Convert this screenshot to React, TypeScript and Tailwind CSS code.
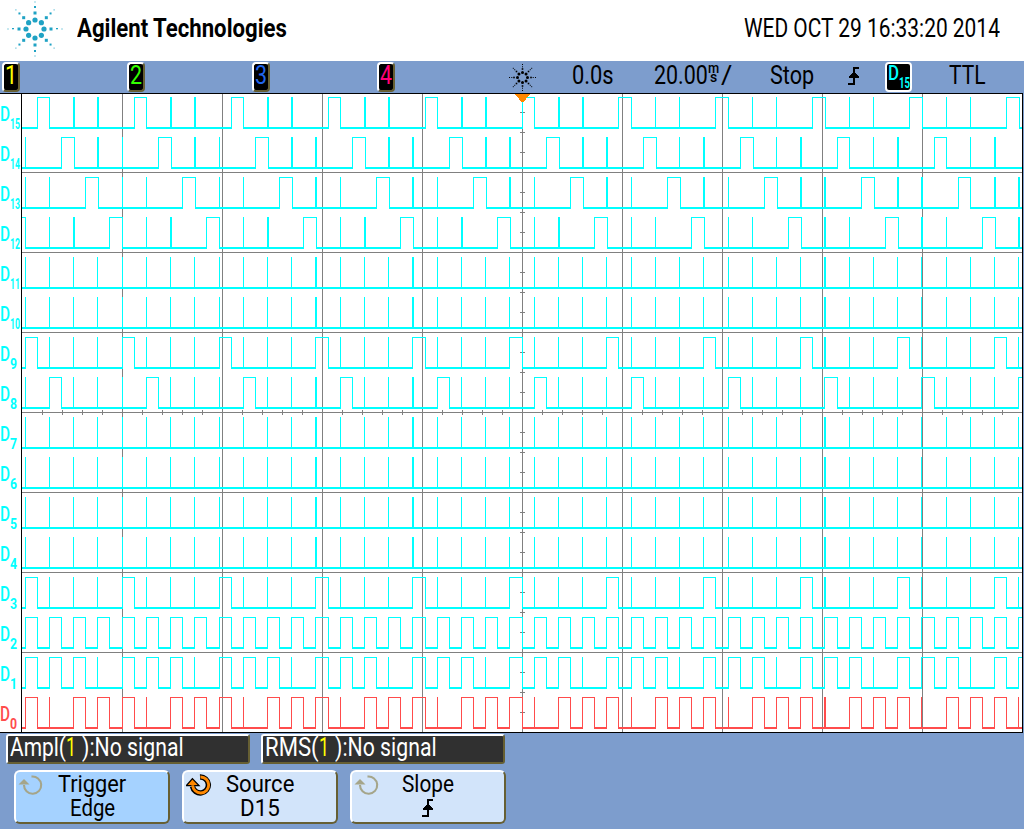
import { useLayoutEffect, useRef, type ReactNode } from "react";

/* Text squeezed horizontally to a given width, for the condensed instrument lettering. */
function Fit({ w, className = "", children }: { w: number; className?: string; children: ReactNode }) {
  const ref = useRef<HTMLSpanElement>(null);
  useLayoutEffect(() => {
    const el = ref.current;
    if (el) el.style.transform = `scaleX(${w / el.offsetWidth})`;
  }, [w]);
  return (
    <span className={`block shrink-0 ${className}`} style={{ width: w }}>
      <span ref={ref} className="inline-block origin-left whitespace-pre">
        {children}
      </span>
    </span>
  );
}

const SLOTS = 42;
const STEP = 24.25;
const rise = (k: number) => Math.floor((k < 12 ? 25.1 : k < 32 ? 24.9 : 24.6) + STEP * k) - (k === 12 || k === 16 ? 0 : 0);
const half = (k: number) => Math.floor((k < 24 ? 37.15 : 36.9) + STEP * k);
const spikeEnd = (k: number) => Math.floor((k < 25 ? 25.5 : 25) + STEP * k);
const lateFall = (k: number) => Math.floor((k < 34 ? 25.5 : k < 39 ? 25.25 : 25) + STEP * k);

type Row = { n: number; late?: number; pulse?: (k: number) => boolean };
const ROWS: Row[] = [
  { n: 15, late: 0 },
  { n: 14, late: 1 },
  { n: 13, late: 2 },
  { n: 12, late: 3 },
  { n: 11 },
  { n: 10 },
  { n: 9, pulse: (k) => k % 4 === 0 },
  { n: 8, pulse: (k) => k % 4 === 1 },
  { n: 7 },
  { n: 6 },
  { n: 5 },
  { n: 4 },
  { n: 3, pulse: (k) => k % 4 === 0 },
  { n: 2, pulse: () => true },
  { n: 1, pulse: (k) => k % 4 !== 3 },
  { n: 0, pulse: (k) => k % 4 !== 1 },
];

const X0 = 22;
const X1 = 1022;

function rowPath(row: Row, top: number) {
  const pulses: [number, number][] = [];
  const spikes: [number, number][] = [];
  if (row.late !== undefined) {
    if (row.late === 3) pulses.push([12, 25]);
    for (let k = 0; k < SLOTS; k++) {
      const m = k % 4;
      if (m === row.late) pulses.push([half(k), lateFall(k + 1)]);
      else if (m !== (row.late + 1) % 4) spikes.push([rise(k), spikeEnd(k)]);
    }
  } else {
    for (let k = 0; k < SLOTS; k++) {
      if (row.pulse?.(k)) pulses.push([rise(k), half(k)]);
      else spikes.push([rise(k), rise(k) + (k === 12 || k === 16 || k === 33 ? 1 : 0)]);
    }
  }
  let d = "";
  const box = (a: number, b: number, y: number, h: number) => {
    const l = Math.max(a, X0);
    const r = Math.min(b, X1);
    if (r > l) d += `M${l} ${y}H${r}V${y + h}H${l}Z`;
  };
  let x = X0;
  for (const [a, b] of pulses) {
    box(x, a + 1, top + 30, 2);
    box(a, a + 1, top, 32);
    box(a, b + 1, top, 1);
    box(b, b + 1, top, 32);
    x = b;
  }
  box(x, X1, top + 30, 2);
  for (const [a, b] of spikes) box(a, b + 1, top, 31);
  return d;
}

function Plot() {
  const ticksX = Array.from({ length: 49 }, (_, i) => 42 + 20 * i).filter((x) => (x - 22) % 100 !== 0);
  const ticksY = Array.from({ length: 31 }, (_, i) => 112 + 20 * i).filter((y) => (y - 92) % 80 !== 0);
  return (
    <svg width="1003" height="640" viewBox="21 93 1003 640" shapeRendering="crispEdges" className="block shrink-0">
      <rect x="21" y="93" width="1003" height="640" fill="#fff" />
      <g fill="#808080">
        {[122, 222, 322, 422, 522, 622, 722, 822, 922].map((x) => (
          <rect key={x} x={x} y="94" width="1" height="638" />
        ))}
        {[172, 252, 332, 412, 492, 572, 652].map((y) => (
          <rect key={y} x="22" y={y} width="1000" height="1" />
        ))}
        {ticksX.map((x) => (
          <rect key={x} x={x} y="410" width="1" height="5" />
        ))}
        {ticksY.map((y) => (
          <rect key={y} x="520" y={y} width="5" height="1" />
        ))}
      </g>
      {ROWS.map((r, i) => (
        <path key={r.n} d={rowPath(r, 97 + 40 * i)} fill={r.n === 0 ? "#ff4c4c" : "#00ffff"} />
      ))}
      <path d="M515 94H530L523.5 102H521.5Z" fill="#ff8800" />
      <path d="M21 93H1023V733H21V732H1022V94H22V733H21Z" fill="#000" />
      <rect x="1023" y="93" width="1" height="640" fill="#7d9dcd" />
    </svg>
  );
}

const DIRS = [0, 1, 2, 3, 4, 5, 6, 7].map((i) => {
  const a = (i * Math.PI) / 4;
  return [Math.cos(a), Math.sin(a)];
});

function Spark() {
  return (
    <svg width="58" height="58" viewBox="-29 -29 58 58" className="block shrink-0" fill="#1fa2c4">
      {DIRS.map(([c, s], i) => (
        <g key={i}>
          <circle cx={c * 9} cy={s * 9} r="2.6" />
          <rect x={c * 16 - 1.5} y={s * 16 - 1.5} width="3" height="3" />
          <rect x={c * 22 - 1} y={s * 22 - 1} width="2" height={i % 4 === 0 ? 1.3 : 2} />
          <rect x={c * 27 - 0.5} y={s * 27 - 0.5} width="1" height="1" />
        </g>
      ))}
    </svg>
  );
}

function SmallSpark() {
  return (
    <svg width="27" height="27" viewBox="-13.5 -13.5 27 27" className="block shrink-0" fill="#000">
      {DIRS.map(([c, s], i) => (
        <g key={i}>
          <circle cx={c * 5} cy={s * 5} r="1.5" />
          <rect x={c * 8.5 - 0.8} y={s * 8.5 - 0.8} width="1.6" height="1.6" />
          <rect x={c * (i % 2 ? 11 : 10.7) - 0.5} y={s * (i % 2 ? 11 : 10.7) - 0.5} width="1" height="1" />
          <rect x={c * 13 - 0.5} y={s * 13 - 0.5} width="1" height="1" />
        </g>
      ))}
    </svg>
  );
}

function RisingEdge() {
  return (
    <svg width="12" height="18" viewBox="0 0 12 18" className="block shrink-0" shapeRendering="crispEdges">
      <path d="M0 16H5V0H11V2H7V18H0Z" fill="#000" />
      <path d="M1 11V9H2V8H3V7H4V6H8V7H9V8H10V9H11V11Z" fill="#000" />
    </svg>
  );
}

function Knob({ active = false }: { active?: boolean }) {
  return (
    <svg width="27" height="22" viewBox="0 0 27 22" className="block shrink-0">
      {active ? (
        <>
          <path d="M14 3A8 8 0 1 1 6.5 12.5" fill="none" stroke="#000" strokeWidth="5.4" />
          <path d="M0.4 11.6L6.4 4.6L13 11.6Z" fill="#ff8800" stroke="#000" strokeWidth="1.3" />
          <path d="M14.4 3A8 8 0 1 1 6.7 11.2" fill="none" stroke="#ff8800" strokeWidth="2.9" />
        </>
      ) : (
        <>
          <path d="M13.5 2.6A8.6 8.6 0 1 1 6 11" fill="none" stroke="#a5a58a" strokeWidth="2.1" />
          <path d="M0.5 10.6L6 5L11.5 10.6Z" fill="#a5a58a" />
        </>
      )}
    </svg>
  );
}

function Channel({ n, color }: { n: string; color: string }) {
  return (
    <div className="w-[125px] shrink-0">
      <div className="flex h-[30px] w-[18px] justify-center rounded-[4px] border-2 border-t-white border-r-[#665f33] border-b-[#665f33] border-l-white bg-black">
        <Fit w={12} className={`text-[25px] leading-[23px] ${color}`}>
          {n}
        </Fit>
      </div>
    </div>
  );
}

function Measure({ name, nameW, gap }: { name: string; nameW: number; gap: string }) {
  return (
    <div className="flex h-[30px] w-[244px] shrink-0 rounded-[3px] border-2 border-t-white border-r-[#665f33] border-b-[#665f33] border-l-white bg-[#303030] pl-[2px] text-[25px] leading-[23px] text-white">
      <Fit w={nameW}>{name}</Fit>
      <Fit w={10} className={`text-[#ffff00] ${gap}`}>
        1
      </Fit>
      <Fit w={102} className="ml-[6px]">
        ):No signal
      </Fit>
    </div>
  );
}

function SoftKey({ title, titleW, bg, active, children }: { title: string; titleW: number; bg: string; active?: boolean; children: ReactNode }) {
  return (
    <div
      className={`grid h-[54px] w-[156px] shrink-0 grid-cols-[152px] grid-rows-[24px_24px] rounded-[6px] border-2 border-t-white border-r-[#665f33] border-b-[#665f33] border-l-white text-[24px] leading-[24px] text-black ${bg}`}
    >
      <div className="grid grid-cols-[28px_96px_28px]">
        <div className="pt-[2px] pl-[2px]">
          <Knob active={active} />
        </div>
        <div className="flex justify-center">
          <Fit w={titleW}>{title}</Fit>
        </div>
      </div>
      <div className="flex justify-center">{children}</div>
    </div>
  );
}

export default function App() {
  return (
    <div className="flex h-[829px] w-[1024px] flex-col overflow-hidden bg-[#7d9dcd] font-['Roboto','Liberation_Sans',sans-serif] text-black">
      <header className="flex h-[61px] shrink-0 justify-between bg-white pr-[24px] pl-[6px]">
        <div className="flex">
          <Spark />
          <Fit w={210} className="ml-[13px] text-[25px] leading-[58px] font-bold">
            Agilent Technologies
          </Fit>
        </div>
        <Fit w={256} className="text-[25px] leading-[58px]">
          WED OCT 29 16:33:20 2014
        </Fit>
      </header>

      <div className="flex h-[32px] shrink-0 pt-px pl-[2px] text-[25px] leading-[28px]">
        <Channel n="1" color="text-[#ffff00]" />
        <Channel n="2" color="text-[#33ff00]" />
        <Channel n="3" color="text-[#2266ee]" />
        <Channel n="4" color="text-[#ff0077]" />
        <div className="ml-[7px] pt-[2px]">
          <SmallSpark />
        </div>
        <Fit w={42} className="ml-[36px]">
          0.0s
        </Fit>
        <Fit w={54} className="ml-[40px]">
          20.00
        </Fit>
        <div className="flex h-[22px] w-[11px] shrink-0 flex-col items-center pt-[2px] text-[14px] leading-[9px] font-medium">
          <Fit w={11}>m</Fit>
          <Fit w={7}>s</Fit>
        </div>
        <Fit w={11} className="ml-[2px]">
          /
        </Fit>
        <Fit w={44} className="ml-[38px]">
          Stop
        </Fit>
        <div className="ml-[34px] pt-[5px]">
          <RisingEdge />
        </div>
        <div className="ml-[25px] flex h-[30px] w-[27px] shrink-0 rounded-[4px] border-2 border-white bg-black pl-px text-[#00ffff]">
          <Fit w={11} className="text-[20px] leading-[19px] font-medium">
            D
          </Fit>
          <Fit w={11} className="pt-[12px] text-[14px] leading-[14px] font-bold">
            15
          </Fit>
        </div>
        <Fit w={37} className="ml-[37px]">
          TTL
        </Fit>
      </div>

      <main className="flex h-[640px] shrink-0">
        <div className="flex w-[21px] shrink-0 flex-col border-t border-b border-black bg-white">
          {ROWS.map((r) => (
            <div key={r.n} className={`flex h-[40px] shrink-0 ${r.n === 0 ? "h-[38px] text-[#ff4c4c]" : "text-[#00ffff]"}`}>
              <Fit w={10} className="pt-[10px] text-[20px] leading-[20px] font-medium">
                D
              </Fit>
              <Fit w={r.n > 9 ? 10 : 7} className="pt-[23px] text-[14px] leading-[14px] font-bold">
                {r.n}
              </Fit>
            </div>
          ))}
        </div>
        <Plot />
      </main>

      <footer className="flex shrink-0 flex-col pt-px">
        <div className="flex gap-[11px] pl-[6px]">
          <Measure name="Ampl(" nameW={56} gap="ml-0" />
          <Measure name="RMS(" nameW={54} gap="ml-0" />
        </div>
        <div className="mt-[6px] flex gap-[12px] pl-[14px]">
          <SoftKey title="Trigger" titleW={68} bg="bg-[#a5d2ff]">
            <Fit w={45}>Edge</Fit>
          </SoftKey>
          <SoftKey title="Source" titleW={68} bg="bg-[#d2e4fa]" active>
            <Fit w={40}>D15</Fit>
          </SoftKey>
          <SoftKey title="Slope" titleW={52} bg="bg-[#d2e4fa]">
            <div className="pt-[3px]">
              <RisingEdge />
            </div>
          </SoftKey>
        </div>
      </footer>
    </div>
  );
}
